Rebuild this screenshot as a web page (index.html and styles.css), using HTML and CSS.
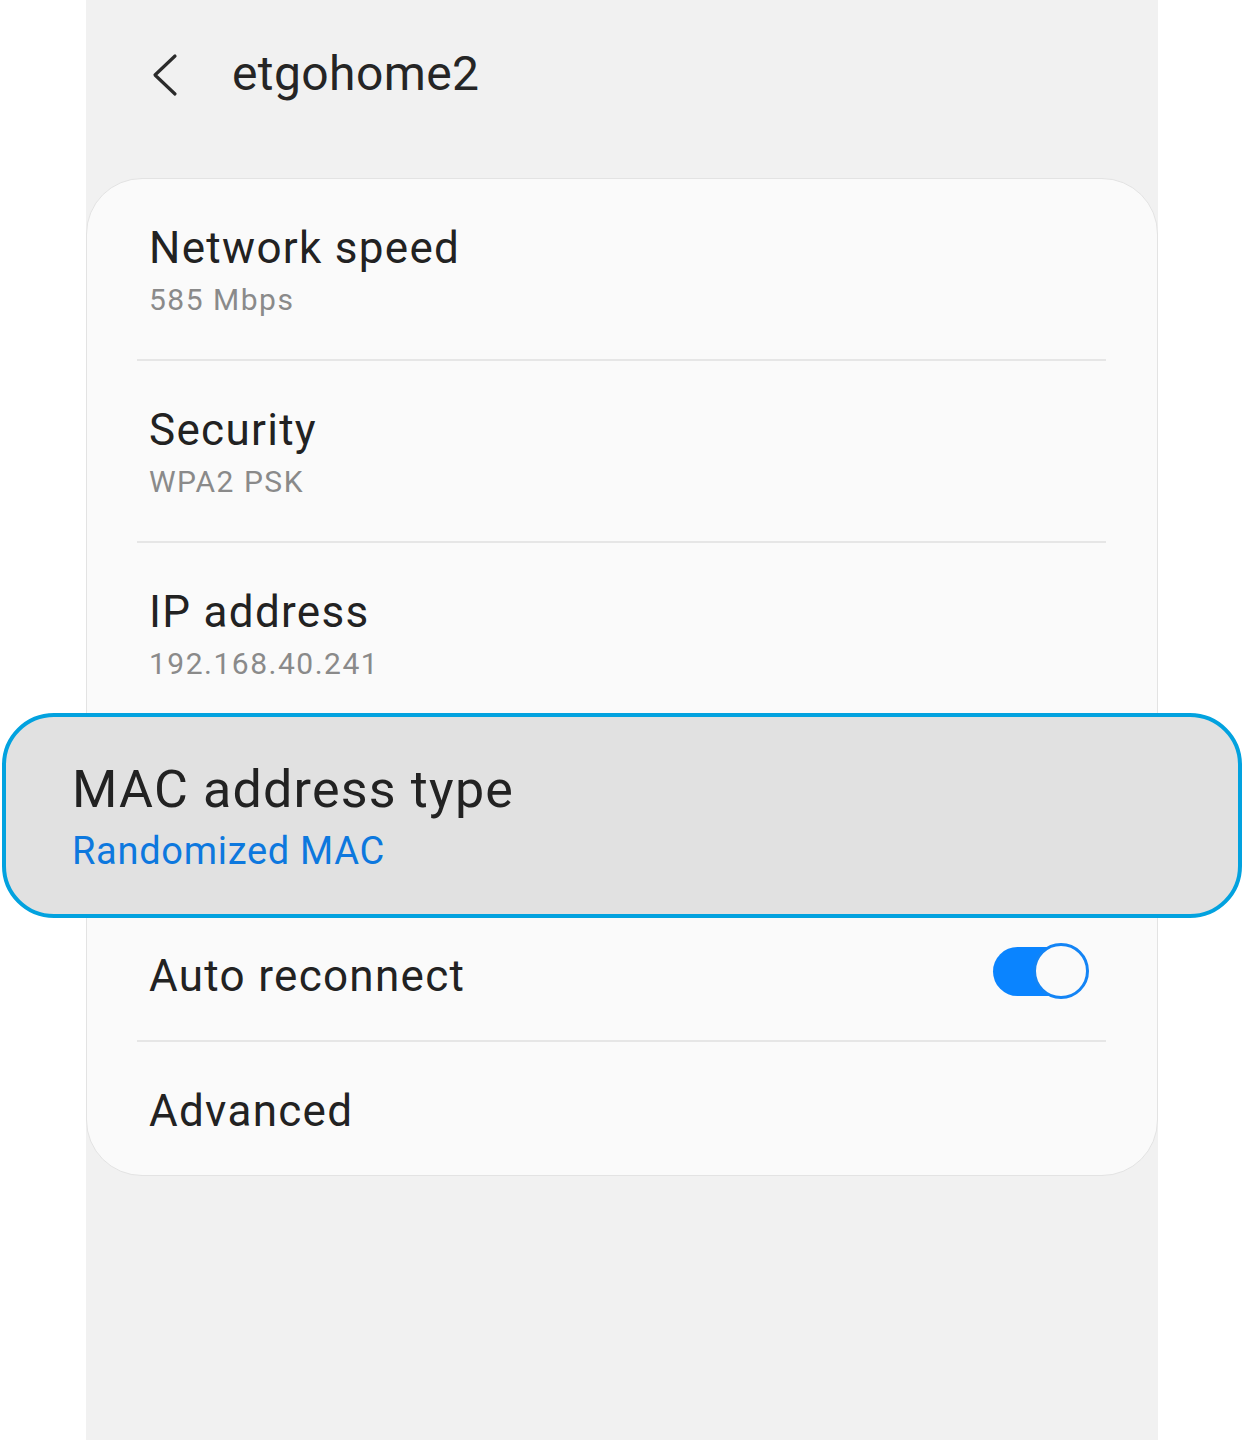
FILE: index.html
```html
<!DOCTYPE html>
<html lang="en">
<head>
<meta charset="utf-8">
<title>etgohome2</title>
<link rel="stylesheet" href="styles.css">
</head>
<body>
<div class="page">
  <div class="screen">
    <header class="appbar">
      <svg class="back" width="40" height="50" viewBox="0 0 40 50" aria-hidden="true">
        <path d="M26 6 L6 25 L26 44" fill="none" stroke="#2b2b2b" stroke-width="3.2" stroke-linecap="round" stroke-linejoin="round"/>
      </svg>
      <h1 class="appbar-title">etgohome2</h1>
    </header>
    <section class="card">
      <div class="row row-two">
        <div class="row-title">Network speed</div>
        <div class="row-sub">585 Mbps</div>
      </div>
      <div class="divider"></div>
      <div class="row row-two">
        <div class="row-title">Security</div>
        <div class="row-sub">WPA2 PSK</div>
      </div>
      <div class="divider"></div>
      <div class="row row-two">
        <div class="row-title">IP address</div>
        <div class="row-sub">192.168.40.241</div>
      </div>
      <div class="divider"></div>
      <div class="row row-two row-covered" aria-hidden="true">
        <div class="row-title">MAC address type</div>
        <div class="row-sub">Randomized MAC</div>
      </div>
      <div class="divider"></div>
      <div class="row row-one row-switch">
        <div class="row-title">Auto reconnect</div>
        <div class="switch"><span class="switch-track"></span><span class="switch-knob"></span></div>
      </div>
      <div class="divider"></div>
      <div class="row row-one">
        <div class="row-title">Advanced</div>
      </div>
    </section>
  </div>
  <div class="callout">
    <div class="callout-title">MAC address type</div>
    <div class="callout-sub">Randomized MAC</div>
  </div>
</div>
</body>
</html>
```

FILE: styles.css
```css
html, body {
  margin: 0;
  padding: 0;
  background: #ffffff;
}
body {
  font-family: Roboto, "Noto Sans", "Liberation Sans", sans-serif;
  color: #222222;
}
.page {
  position: relative;
  width: 1244px;
  height: 1440px;
  overflow: hidden;
}
.screen {
  margin-left: 86px;
  width: 1072px;
  height: 1440px;
  background: #f1f1f1;
  display: flex;
  flex-direction: column;
}
.appbar {
  height: 178px;
  display: flex;
  align-items: flex-start;
  box-sizing: border-box;
  padding-top: 44px;
}
.back {
  margin-left: 63px;
  margin-top: 6px;
  flex: none;
}
.appbar-title {
  margin: 0 0 0 43px;
  font-weight: 400;
  font-size: 48px;
  line-height: 60px;
  color: #252525;
  letter-spacing: 0.4px;
}
.card {
  background: #fafafa;
  border: 1px solid #e3e3e3;
  border-radius: 56px;
  display: flex;
  flex-direction: column;
}
.row {
  box-sizing: border-box;
  padding-left: 62px;
  padding-right: 68px;
}
.row-two {
  height: 180px;
  padding-top: 43px;
}
.row-one {
  height: 133px;
  padding-top: 43px;
}
.row-covered {
  visibility: hidden;
}
.row-title {
  font-size: 44px;
  line-height: 52px;
  color: #222222;
  letter-spacing: 1.3px;
}
.row-sub {
  margin-top: 8px;
  font-size: 30px;
  line-height: 36px;
  color: #8a8a8a;
  letter-spacing: 1.5px;
}
.divider {
  height: 2px;
  background: #e6e6e6;
  margin: 0 51px 0 50px;
}
.row-switch {
  display: flex;
  justify-content: space-between;
  align-items: flex-start;
}
.switch {
  position: relative;
  width: 96px;
  height: 58px;
  margin-top: -7px;
  flex: none;
}
.switch-track {
  position: absolute;
  left: 0;
  top: 4px;
  width: 80px;
  height: 49px;
  border-radius: 25px;
  background: #0a84ff;
}
.switch-knob {
  position: absolute;
  right: 0;
  top: 0;
  width: 50px;
  height: 50px;
  border-radius: 50%;
  background: #fafafa;
  border: 3px solid #1384f5;
}
.callout {
  position: absolute;
  left: 2px;
  top: 713px;
  width: 1240px;
  height: 205px;
  box-sizing: border-box;
  border: 4px solid #02a2df;
  border-radius: 52px;
  background: #e1e1e1;
  padding: 43px 0 0 66px;
}
.callout-title {
  font-size: 52px;
  line-height: 60px;
  color: #222222;
  letter-spacing: 1.2px;
}
.callout-sub {
  margin-top: 9px;
  font-size: 38px;
  line-height: 44px;
  color: #0d78de;
  letter-spacing: 0.7px;
}
```
